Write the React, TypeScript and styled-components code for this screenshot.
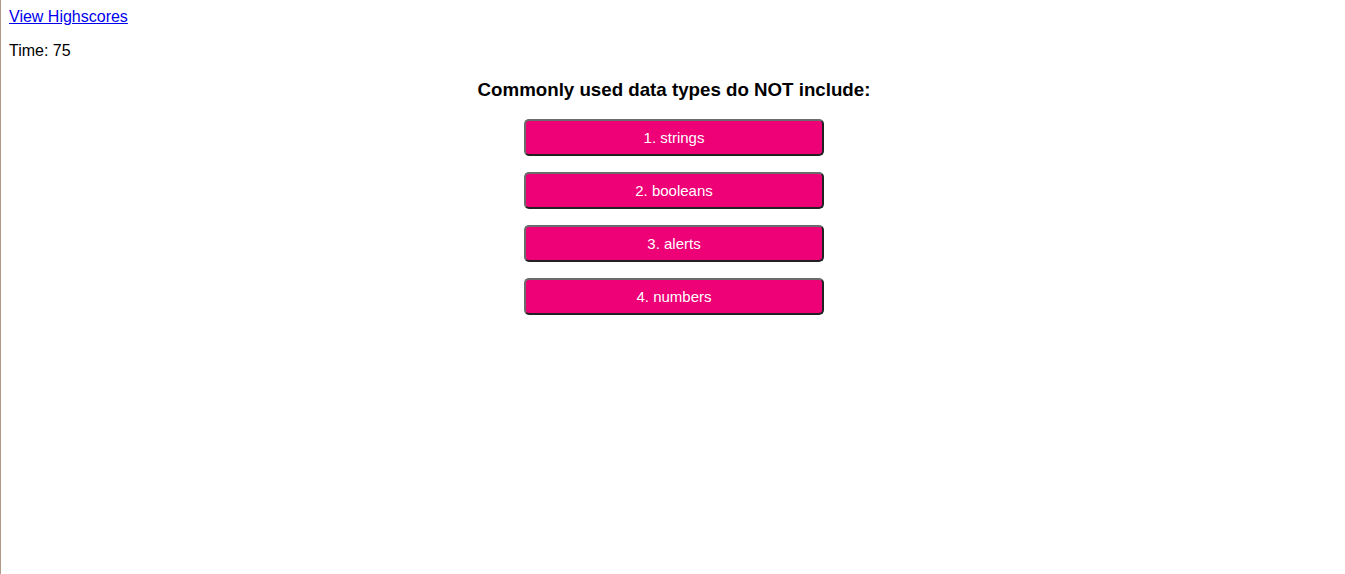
import * as React from 'react';
import styled, { createGlobalStyle } from 'styled-components';

const GlobalStyle = createGlobalStyle`
  html {
    min-height: 100vh;
    box-sizing: border-box;
    border-left: 1px solid #b59a8c;
  }
  body {
    margin: 8px 6px 8px 8px;
    font-family: "Liberation Sans", Arial, sans-serif;
    font-size: 16px;
    color: #000;
    background: #fff;
  }
`;

const HighscoreLink = styled.a`
  color: #0000ee;
  text-decoration: underline;
  cursor: pointer;
`;

const Timer = styled.p`
  margin: 16px 0;
`;

const Quiz = styled.section`
  display: block;
`;

const Question = styled.h3`
  margin: 18.72px 0;
  font-size: 18.72px;
  font-weight: bold;
  text-align: center;
`;

const Answers = styled.div`
  display: flex;
  flex-direction: column;
  align-items: center;
  gap: 16px;
`;

const AnswerButton = styled.button`
  width: 300px;
  padding: 8px 0;
  border: 2px solid;
  border-color: #6b6b6b #222 #222 #6b6b6b;
  border-radius: 5px;
  background: #ee0077;
  color: #fff;
  font-family: "Liberation Sans", Arial, sans-serif;
  font-size: 15px;
  line-height: 17px;
  cursor: pointer;
`;

const answers = ['1. strings', '2. booleans', '3. alerts', '4. numbers'];

const App: React.FunctionComponent = (): JSX.Element => {
  return (
    <>
      <GlobalStyle />
      <HighscoreLink href="#">View Highscores</HighscoreLink>
      <Timer>Time: 75</Timer>
      <Quiz>
        <Question>Commonly used data types do NOT include:</Question>
        <Answers>
          {answers.map(a => (
            <AnswerButton key={a}>{a}</AnswerButton>
          ))}
        </Answers>
      </Quiz>
    </>
  );
};

export default App;
